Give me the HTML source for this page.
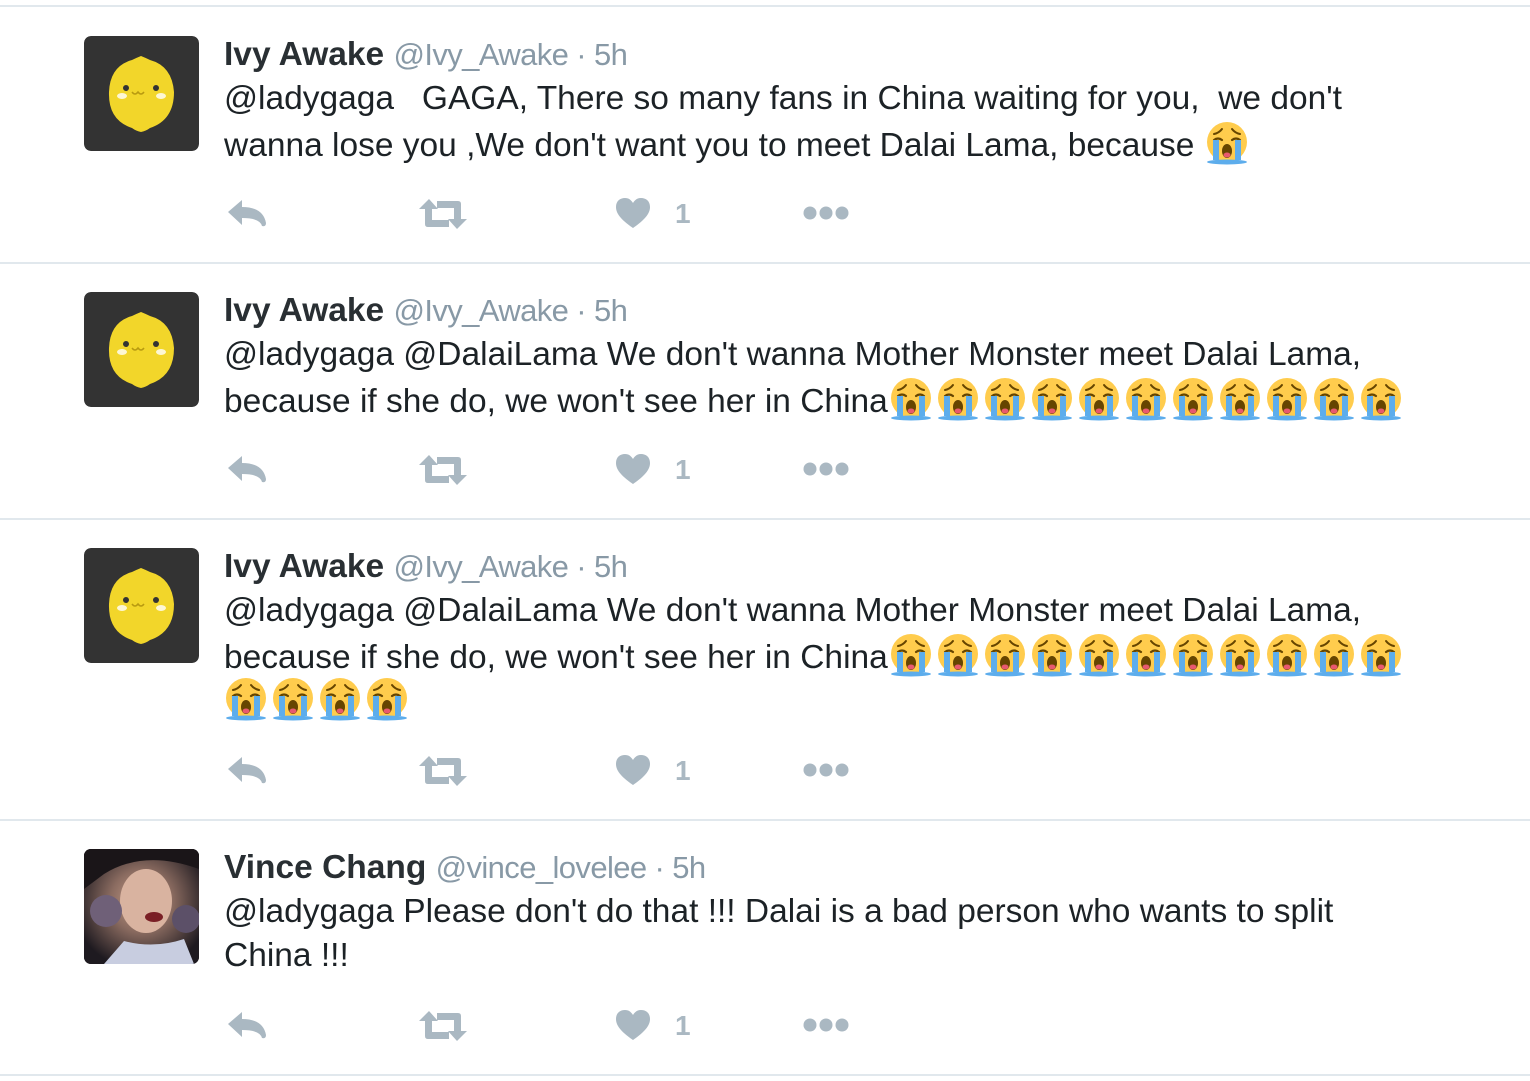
<!DOCTYPE html>
<html><head><meta charset="utf-8"><style>
html,body{margin:0;padding:0;background:#fff;width:1530px;height:1081px;overflow:hidden;position:relative;font-family:"Liberation Sans",Helvetica,Arial,sans-serif;color:#1c2226}
.sep{position:absolute;left:0;width:1530px;height:2px;background:#e1e8ed}
.av{position:absolute;left:84px;width:115px;height:115px;border-radius:7px;background:#333;overflow:hidden}
.t{position:absolute;left:224px;white-space:pre;font-size:33.5px;line-height:44px;}
.name{font-weight:bold;color:#292f33}
.h{color:#8899a6;letter-spacing:-0.6px;font-size:31px}
.e{display:inline-block;width:44px;height:44px;vertical-align:-9px;margin:0 1.5px}
.ic{position:absolute}
.n1{position:absolute;color:#aab8c2;font-weight:bold;font-size:28px}
</style></head><body>
<svg width="0" height="0" style="position:absolute">
<defs>
<symbol id="cry" viewBox="0 0 44 44">
<circle cx="22" cy="21" r="20" fill="#FFCC4D"/>
<path d="M9 13 Q14 12 17 8 M35 13 Q30 12 27 8" stroke="#664500" stroke-width="2" fill="none" stroke-linecap="round"/>
<path d="M9 19 Q13 16 17 19 M27 19 Q31 16 35 19" stroke="#664500" stroke-width="2.2" fill="none" stroke-linecap="round"/>
<path d="M8 19h6v20h-6z M30 19h6v20h-6z" fill="#5DADEC"/>
<ellipse cx="22" cy="41" rx="20" ry="2.5" fill="#5DADEC"/>
<ellipse cx="22" cy="30" rx="5" ry="7" fill="#664500"/>
<ellipse cx="22" cy="34" rx="3.5" ry="2.5" fill="#E8596E"/>
</symbol>
<symbol id="lemon" viewBox="0 0 115 115">
<rect width="115" height="115" rx="7" fill="#333"/>
<path d="M57 20 Q62 22 66 24 Q88 30 90 56 Q90 84 66 92 Q62 95 57 96 Q52 95 48 92 Q24 84 25 56 Q26 30 48 24 Q52 22 57 20Z" fill="#F2D62A"/>
<circle cx="42" cy="52" r="3" fill="#333"/><circle cx="72" cy="52" r="3" fill="#333"/>
<ellipse cx="38" cy="60" rx="5" ry="3" fill="#fff" opacity=".8"/><ellipse cx="77" cy="60" rx="5" ry="3" fill="#fff" opacity=".8"/>
<path d="M48 56 q3 4 6 0 q3 4 6 0" stroke="#b89a10" stroke-width="1.5" fill="none"/>
</symbol>
<symbol id="reply" viewBox="0 0 40 28"><path d="M1 13 L15 1 V8 Q36 8 39 24 Q39 28 35 27 Q33 19 15 19 V26 Z" fill="#aab8c2"/></symbol>
<symbol id="rt" viewBox="0 0 48 30"><path d="M10 0 L19 10 H13 V21 H30 V28 H9 Q6 28 6 25 V10 H0 Z M38 30 L29 20 H35 V9 H18 V2 H39 Q42 2 42 5 V20 H48 Z" fill="#aab8c2"/></symbol>
<symbol id="heart" viewBox="0 0 36 32"><path d="M18 31 C5 22 1 16 1 10 C1 4 5 1 10 1 C14 1 16 3 18 6 C20 3 22 1 26 1 C31 1 35 4 35 10 C35 16 31 22 18 31Z" fill="#aab8c2"/></symbol>
<symbol id="more" viewBox="0 0 48 16"><circle cx="8" cy="8" r="6.5" fill="#aab8c2"/><circle cx="24" cy="8" r="6.5" fill="#aab8c2"/><circle cx="40" cy="8" r="6.5" fill="#aab8c2"/></symbol>
</defs></svg>

<div class="sep" style="top:5px"></div>
<div class="sep" style="top:262px"></div>
<div class="sep" style="top:518px"></div>
<div class="sep" style="top:819px"></div>
<div class="sep" style="top:1074px"></div>

<!-- tweet 1 -->
<svg class="av" style="top:36px;background:none" width="115" height="115"><use href="#lemon"/></svg>
<div class="t" style="top:33px"><span class="name">Ivy Awake</span> <span class="h">@Ivy_Awake · 5h</span></div>
<div class="t" style="top:77px">@ladygaga   GAGA, There so many fans in China waiting for you,  we don't</div>
<div class="t" style="top:121px">wanna lose you ,We don't want you to meet Dalai Lama, because <svg class="e"><use href="#cry"/></svg></div>
<svg class="ic" style="left:227px;top:199px" width="40" height="28"><use href="#reply"/></svg>
<svg class="ic" style="left:419px;top:199px" width="48" height="30"><use href="#rt"/></svg>
<svg class="ic" style="left:615px;top:197px" width="36" height="32"><use href="#heart"/></svg>
<div class="n1" style="left:675px;top:198px">1</div>
<svg class="ic" style="left:802px;top:205px" width="48" height="16"><use href="#more"/></svg>

<!-- tweet 2 -->
<svg class="av" style="top:292px;background:none" width="115" height="115"><use href="#lemon"/></svg>
<div class="t" style="top:289px"><span class="name">Ivy Awake</span> <span class="h">@Ivy_Awake · 5h</span></div>
<div class="t" style="top:333px">@ladygaga @DalaiLama We don't wanna Mother Monster meet Dalai Lama,</div>
<div class="t" style="top:377px">because if she do, we won't see her in China<svg class="e"><use href="#cry"/></svg><svg class="e"><use href="#cry"/></svg><svg class="e"><use href="#cry"/></svg><svg class="e"><use href="#cry"/></svg><svg class="e"><use href="#cry"/></svg><svg class="e"><use href="#cry"/></svg><svg class="e"><use href="#cry"/></svg><svg class="e"><use href="#cry"/></svg><svg class="e"><use href="#cry"/></svg><svg class="e"><use href="#cry"/></svg><svg class="e"><use href="#cry"/></svg></div>
<svg class="ic" style="left:227px;top:455px" width="40" height="28"><use href="#reply"/></svg>
<svg class="ic" style="left:419px;top:455px" width="48" height="30"><use href="#rt"/></svg>
<svg class="ic" style="left:615px;top:453px" width="36" height="32"><use href="#heart"/></svg>
<div class="n1" style="left:675px;top:454px">1</div>
<svg class="ic" style="left:802px;top:461px" width="48" height="16"><use href="#more"/></svg>

<!-- tweet 3 -->
<svg class="av" style="top:548px;background:none" width="115" height="115"><use href="#lemon"/></svg>
<div class="t" style="top:545px"><span class="name">Ivy Awake</span> <span class="h">@Ivy_Awake · 5h</span></div>
<div class="t" style="top:589px">@ladygaga @DalaiLama We don't wanna Mother Monster meet Dalai Lama,</div>
<div class="t" style="top:633px">because if she do, we won't see her in China<svg class="e"><use href="#cry"/></svg><svg class="e"><use href="#cry"/></svg><svg class="e"><use href="#cry"/></svg><svg class="e"><use href="#cry"/></svg><svg class="e"><use href="#cry"/></svg><svg class="e"><use href="#cry"/></svg><svg class="e"><use href="#cry"/></svg><svg class="e"><use href="#cry"/></svg><svg class="e"><use href="#cry"/></svg><svg class="e"><use href="#cry"/></svg><svg class="e"><use href="#cry"/></svg></div>
<div class="t" style="top:677px;left:224px"><svg class="e" style="margin-left:0"><use href="#cry"/></svg><svg class="e"><use href="#cry"/></svg><svg class="e"><use href="#cry"/></svg><svg class="e"><use href="#cry"/></svg></div>
<svg class="ic" style="left:227px;top:756px" width="40" height="28"><use href="#reply"/></svg>
<svg class="ic" style="left:419px;top:756px" width="48" height="30"><use href="#rt"/></svg>
<svg class="ic" style="left:615px;top:754px" width="36" height="32"><use href="#heart"/></svg>
<div class="n1" style="left:675px;top:755px">1</div>
<svg class="ic" style="left:802px;top:762px" width="48" height="16"><use href="#more"/></svg>

<!-- tweet 4 -->
<svg class="av" style="top:849px" width="115" height="115">
<defs><radialGradient id="bg4" cx="50%" cy="45%" r="60%"><stop offset="0" stop-color="#c89f8a"/><stop offset=".45" stop-color="#8a6b60"/><stop offset="1" stop-color="#1e1a20"/></radialGradient></defs>
<rect width="115" height="115" fill="url(#bg4)"/>
<ellipse cx="62" cy="52" rx="26" ry="32" fill="#d9b3a0"/>
<circle cx="22" cy="62" r="16" fill="#6f6078"/>
<circle cx="102" cy="70" r="14" fill="#5c5068"/>
<ellipse cx="70" cy="68" rx="9" ry="5" fill="#7a1f25"/>
<path d="M20 115 L40 92 Q70 100 100 90 L110 115Z" fill="#c8cde0"/>
<path d="M0 0 H115 V20 Q60 0 20 25 L0 40Z" fill="#1a1518"/>
</svg>
<div class="t" style="top:846px"><span class="name">Vince Chang</span> <span class="h">@vince_lovelee · 5h</span></div>
<div class="t" style="top:890px">@ladygaga Please don't do that !!! Dalai is a bad person who wants to split</div>
<div class="t" style="top:934px">China !!!</div>
<svg class="ic" style="left:227px;top:1011px" width="40" height="28"><use href="#reply"/></svg>
<svg class="ic" style="left:419px;top:1011px" width="48" height="30"><use href="#rt"/></svg>
<svg class="ic" style="left:615px;top:1009px" width="36" height="32"><use href="#heart"/></svg>
<div class="n1" style="left:675px;top:1010px">1</div>
<svg class="ic" style="left:802px;top:1017px" width="48" height="16"><use href="#more"/></svg>
</body></html>
